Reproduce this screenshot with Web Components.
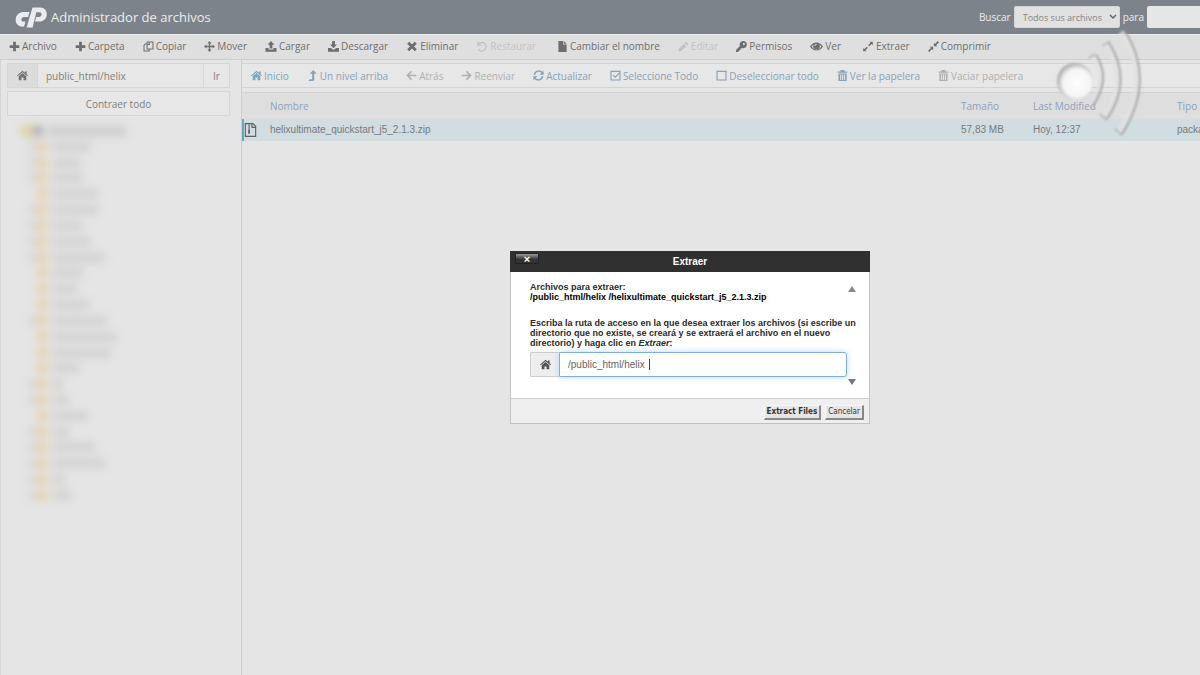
<!DOCTYPE html>
<html lang="es">
<head>
<meta charset="utf-8">
<title>Administrador de archivos</title>
<style>
html, body { margin: 0; height: 100%; }
body { background: #e5e5e5; font-family: "Open Sans", "Noto Sans", sans-serif; font-size: 10px; color: #747474; overflow: hidden; }
</style>
</head>
<body>
<fm-app></fm-app>
<script>
const define = (name, html, setup) => {
  const tpl = document.createElement('template');
  tpl.innerHTML = html;
  customElements.define(name, class extends HTMLElement {
    constructor() {
      super();
      this.attachShadow({ mode: 'open' }).append(tpl.content.cloneNode(true));
    }
    connectedCallback() { if (setup) setup(this, this.shadowRoot); }
  });
};

const ICONS = {
  plus: '<path d="M6 1h4v5h5v4h-5v5H6v-5H1V6h5z"/>',
  copy: '<path d="M6 1.500h8.500v10H6zM6 4.500H3L1.500 6v8.500H9V12M9 1.500V5H6" fill="none" stroke="currentColor" stroke-width="1.500"/>',
  move: '<path d="M8 0l3 3.500H9V7h3.500V5L16 8l-3.500 3V9H9v3.500h2L8 16l-3-3.500h2V9H3.500v2L0 8l3.500-3v2H7V3.500H5z"/>',
  upload: '<path d="M8 0l5 5.500h-3V11H6V5.500H3zM0 10h4.500v2.500h7V10H16v5.500H0z"/>',
  download: '<path d="M6 0h4v5h3l-5 5.500L3 5h3zM0 10h4l4 3 4-3h4v5.500H0z"/>',
  times: '<path d="M4 1l4 4 4-4 3 3-4 4 4 4-3 3-4-4-4 4-3-3 4-4-4-4z"/>',
  undo: '<path d="M2 1v5h5M2.500 5.500C5 1.500 10 1 12.500 4c3 3.500 1 8.500-2.500 10-2.500 1-5 .5-7-1.500" fill="none" stroke="currentColor" stroke-width="2"/>',
  file: '<path d="M2 0h7v5h5v11H2zM10 0l4 4h-4z"/>',
  pencil: '<path d="M11.500 1l3.500 3.500-2 2L9.500 3zM8.500 4L12 7.500 4.500 15H1v-3.500z"/>',
  key: '<path d="M10.500 0a5.200 5.200 0 0 1 0 10.400c-.8 0-1.500-.1-2.200-.4L6.500 11.500V13H5v1.500H3.500V16H0v-3l5.700-5.700A5.200 5.200 0 0 1 10.500 0zM11.500 3a1.500 1.500 0 1 0 1.500 1.500A1.500 1.500 0 0 0 11.500 3z" fill-rule="evenodd"/>',
  eye: '<path d="M0 8c4-6.500 12-6.500 16 0-4 6.500-12 6.500-16 0zm2 0c3 4.700 9 4.700 12 0-.8-1.200-1.700-2-2.800-2.600a4 4 0 1 1-6.400 0C3.700 6 2.800 6.800 2 8zm6-3.500A3 3 0 0 0 5.500 7H7a1.500 1.500 0 0 1 1-1z" fill-rule="evenodd"/>',
  expand: '<path d="M10 1h5v5l-1.700-1.700-3.500 3.500-1.600-1.600 3.500-3.500zM1 10l1.700 1.700 3.500-3.500 1.600 1.600-3.500 3.500L6 15H1z"/>',
  compress: '<path d="M8.500 2.500l1.700 1.700L14 0l2 2-4.200 3.800 1.700 1.700h-5zM2.500 8.500h5v5l-1.700-1.700L2 16l-2-2 4.200-3.800z"/>',
  home: '<path d="M8 1l3.500 3V2H14v4.200L16 8l-1 1.200L8 3.200 1 9.200 0 8zM8 4.500l5.500 4.700V15H9.500v-4h-3v4h-4V9.200z"/>',
  up: '<path d="M9 0l5 5.500h-3.500V14q0 2-2 2H2l2-2.500h3.500v-8H4z"/>',
  left: '<path d="M8 2L2 8l6 6M2 8h13" fill="none" stroke="currentColor" stroke-width="2.200"/>',
  right: '<path d="M8 2l6 6-6 6M14 8H1" fill="none" stroke="currentColor" stroke-width="2.200"/>',
  refresh: '<path d="M2 7c1-6 8.500-7.500 12-2.500M14 9c-1 6-8.500 7.500-12 2.500" fill="none" stroke="currentColor" stroke-width="2.200"/><path d="M15.500 1v6h-6zM.5 15V9h6z"/>',
  checked: '<path d="M1.500 2h13v12.500h-13zM4.500 7.500l3 3 6-6" fill="none" stroke="currentColor" stroke-width="1.700"/>',
  square: '<path d="M1.500 2h13v12.500h-13z" fill="none" stroke="currentColor" stroke-width="1.700"/>',
  trash: '<path d="M5 0h6v2h4v2H1V2h4zM2 5h12v11H2zM4.500 6.500v8H6v-8zm2.800 0v8h1.500v-8zm2.800 0v8h1.500v-8z" fill-rule="evenodd"/>',
  zip: '<path d="M2.500 1.200h8L13.500 4v10.800h-11zM9.500 1.200v4h4M6.500 2v6" fill="none" stroke="currentColor" stroke-width="1.200"/><path d="M5.500 8h2v4h-2z"/>'
};

define('fm-icon', `<style>
:host { display: block; flex: none; width: 11px; height: 11px; }
:host([wide]) { width: 12px; }
:host([name="eye"]) { width: 13px; height: 13px; }
svg { display: block; width: 100%; height: 100%; fill: currentColor; }
</style><svg viewBox="0 0 16 16" aria-hidden="true"></svg>`, (el, root) => {
  root.querySelector('svg').innerHTML = ICONS[el.getAttribute('name')] || '';
});

define('fm-action', `<style>
:host { display: block; flex: none; }
:host([group]) { margin-left: 3px; }
button { display: flex; align-items: center; gap: 2px; margin: 0; padding: 0 9px; border: 0; background: none; font: inherit; line-height: 16px; color: inherit; white-space: nowrap; }
:host([disabled]) { color: var(--disabled, #c2c2c2); }
</style><button type="button"><fm-icon></fm-icon><slot></slot></button>`, (el, root) => {
  const icon = root.querySelector('fm-icon');
  const fresh = document.createElement('fm-icon');
  fresh.setAttribute('name', el.getAttribute('icon'));
  if (el.hasAttribute('wide')) fresh.setAttribute('wide', '');
  icon.replaceWith(fresh);
  root.querySelector('button').disabled = el.hasAttribute('disabled');
});

define('fm-header', `<style>
:host { display: flex; align-items: center; height: 34px; padding-left: 15px; background: #7c838b; color: #eceeef; }
svg { width: 33px; height: 24px; flex: none; }
h1 { margin: 0 auto 0 3px; font-size: 13px; line-height: 20px; font-weight: 400; white-space: nowrap; }
form { display: flex; align-items: center; gap: 3px; }
.pick { display: flex; position: relative; }
select { appearance: none; width: 106px; height: 22px; margin: 0; padding: 0 8px; border: 1px solid #d5d5d5; border-radius: 2px; background: #e1e1e1; color: #858585; font: inherit; font-size: 9px; }
.pick svg { position: absolute; right: 3px; top: 7px; width: 8px; height: 8px; }
input { box-sizing: border-box; width: 53px; height: 22px; border: 0; border-radius: 2px 0 0 2px; background: #e6e6e6; font: inherit; }
</style>
<svg viewBox="0 0 33 24" aria-hidden="true"><g fill="#e9edf1" fill-rule="evenodd"><path d="M14.500 7l-1.300 5H9c-3 0-3.500 4.500-.8 4.500h2.300l-1.400 5H7.500C-2.500 21.500-1 7 8.500 7z"/><path d="M17.500 2.500h7.300C34.500 2.500 34 16.500 24 16.500h-4l1.200-4.600h2.600c3.300 0 3.900-4.700.7-4.700h-3.200L17.600 22.500h-6z"/></g></svg>
<h1>Administrador de archivos</h1>
<form><label for="scope">Buscar</label>
<span class="pick"><select id="scope"><option>Todos sus archivos</option></select><svg viewBox="0 0 8 8"><path d="M1 2l3 3 3-3" fill="none" stroke="#666" stroke-width="1.500"/></svg></span>
<label for="term">para</label><input id="term" type="search"></form>`);

define('fm-toolbar', `<style>
:host { display: flex; align-items: flex-start; padding-top: 3px; box-sizing: border-box; height: 26px; border-top: 1px solid #ececec; border-bottom: 1px solid #cdcdcd; background: #dfdfdf; color: #6e6e6e; }
</style><slot></slot>`);

define('fm-sidebar', `<style>
:host { display: block; flex: none; width: 242px; box-sizing: border-box; border-right: 1px solid #cfcfcf; border-left: 1px solid #d5d5d5; padding: 3px 11px 0 6px; }
.path { display: flex; height: 25px; box-sizing: border-box; border: 1px solid #d6d6d6; }
.home { display: grid; place-items: center; width: 29px; border-right: 1px solid #d6d6d6; background: #dcdcdc; }
input { flex: 1; min-width: 0; border: 0; padding: 0 8px; background: #e7e7e7; color: #808080; font: inherit; }
button { margin: 0; border: 1px solid #d6d6d6; background: #e7e7e7; color: #808080; font: inherit; line-height: 16px; }
.path button { width: 26px; border-width: 0 0 0 1px; padding: 0; }
.all { display: block; width: 100%; height: 25px; margin-top: 3px; padding: 0; }
</style>
<div class="path"><span class="home"><fm-icon name="home"></fm-icon></span><input aria-label="Ruta" value="public_html/helix"><button type="button">Ir</button></div>
<button class="all" type="button">Contraer todo</button>
<fm-tree></fm-tree>`);

define('fm-tree', `<style>
:host { display: flex; flex-direction: column; height: 380px; margin-top: 7px; filter: blur(4px); }
.row { display: flex; flex: 1; align-items: center; padding-left: 21px; }
.row i { display: block; height: 10px; }
.knob { width: 8px; background: #d8d8d8; }
.knob.leaf { background: none; }
.folder { width: 12px; background: #e6d2b2; }
.name { margin-left: 5px; background: #d3d3d3; }
.row.root { padding-left: 14px; }
.root .folder { background: #e0d09c; }
.root .disk { width: 10px; background: #acacb0; }
.root .name { margin-left: 5px; background: #cdcdcd; }
</style><div class="row root"><i class="folder"></i><i class="disk"></i><i class="name" style="width:78px"></i></div>`, (el, root) => {
  const rows = [[38, 1], [28, 1], [30, 1], [45, 0], [46, 1], [30, 1], [38, 1], [52, 1], [30, 0], [24, 0], [36, 0], [54, 1], [64, 0], [58, 0], [26, 0], [10, 1], [16, 1], [34, 0], [16, 1], [42, 1], [52, 1], [12, 1], [18, 1]];
  for (const [w, open] of rows) {
    const row = document.createElement('div');
    row.className = 'row';
    row.innerHTML = '<i class="knob' + (open ? '' : ' leaf') + '"></i><i class="folder"></i><i class="name" style="width:' + w + 'px"></i>';
    root.append(row);
  }
});

define('fm-files', `<style>
:host { display: block; flex: 1; min-width: 0; padding-top: 3px; overflow: hidden; --disabled: #afafaf; }
nav { display: flex; align-items: center; height: 25px; box-sizing: border-box; border: solid #d3d3d3; border-width: 1px 0 1px 0; background: #e7e7e7; color: #88a2b8; }
nav ::slotted([icon="home"]) { color: #7ba6c4; }
table { width: 100%; margin-top: 4px; table-layout: fixed; border-collapse: collapse; text-align: left; white-space: nowrap; }
th { height: 26px; box-sizing: border-box; padding: 0; background: #dedede; border-top: 1px solid #d2d2d2; color: #919fbb; font-size: 10px; font-weight: 400; }
td { height: 22px; padding: 0; background: #d2dde1; font-family: "Liberation Sans", Arial, sans-serif; font-size: 10px; color: #757a7d; }
td:first-child { box-shadow: inset 2px 0 #6ba6bf; padding-left: 1px; }
td fm-icon { width: 15px; height: 16px; color: #606060; }
.mark { width: 28px; } .size { width: 72px; } .date { width: 144px; } .type { width: 23px; }
</style>
<nav><slot></slot></nav>
<table>
<thead><tr><th class="mark"></th><th>Nombre</th><th class="size">Tamaño</th><th class="date">Last Modified</th><th class="type">Tipo</th></tr></thead>
<tbody><tr><td><fm-icon name="zip"></fm-icon></td><td>helixultimate_quickstart_j5_2.1.3.zip</td><td>57,83 MB</td><td>Hoy, 12:37</td><td>packa</td></tr></tbody>
</table>`);

define('fm-dialog', `<style>
:host { position: absolute; left: 510px; top: 251px; width: 360px; display: block; box-sizing: border-box; border: 1px solid #c2c2c2; border-top: 0; background: #fff; color: #2b2b2b; font: bold 9px/10px "Liberation Sans", Arial, sans-serif; }
header { display: flex; height: 21px; margin: 0 -1px; background: #303030; color: #fff; position: relative; }
h2 { margin: auto; font-size: 10px; line-height: 20px; }
.close { position: absolute; left: 5px; top: 2px; width: 24px; height: 11px; padding: 0; border: 1px solid #222; background: linear-gradient(#999, #333 60%); color: #fff; font: bold 11px/8px "Liberation Sans", sans-serif; }
.body { position: relative; padding: 10px 8px 21px 19px; }
p { margin: 0 0 16px; }
p + p { margin-bottom: 4px; }
strong { color: #000; }
.scroll i { position: absolute; right: 13px; border: solid transparent; border-width: 0 4px; }
.scroll .up { top: 14px; border-bottom: 6px solid #888; }
.scroll .down { bottom: 13px; border-top: 6px solid #777; }
.field { display: flex; height: 25px; margin-right: 14px; position: relative; }
.home { display: grid; place-items: center; width: 29px; box-sizing: border-box; border: 1px solid #ccc; border-right: 0; border-radius: 2px 0 0 2px; background: #eee; color: #555; }
input { flex: 1; min-width: 0; box-sizing: border-box; padding: 0 8px; border: 1px solid #7fb0dc; border-radius: 0 3px 3px 0; box-shadow: 0 0 6px #b5daf5; font: 10px "Liberation Sans", sans-serif; color: #666; outline: 0; }
.caret { position: absolute; left: 119px; top: 7px; width: 1px; height: 11px; background: #444; }
footer { display: flex; justify-content: flex-end; gap: 4px; padding: 6px 5px 3px; border-top: 1px solid #ccc; background: #efefef; }
footer button { height: 15px; margin: 0; padding: 0 2px; border: 1px solid #f8f8f8; border-right: 2px solid #888; border-bottom: 2px solid #888; background: #e6e6e6; color: #333; font: 8px/10px "DejaVu Sans Condensed", "Open Sans", sans-serif; }
footer .main { font-weight: bold; }
</style>
<header><button class="close" type="button" aria-label="Cerrar">×</button><h2>Extraer</h2></header>
<div class="body"><p>Archivos para extraer:<br><strong>/public_html/helix /helixultimate_quickstart_j5_2.1.3.zip</strong></p>
<p><label for="dest">Escriba la ruta de acceso en la que desea extraer los archivos (si escribe un directorio que no existe, se creará y se extraerá el archivo en el nuevo directorio) y haga clic en <em>Extraer</em>:</label></p>
<div class="field"><span class="home"><fm-icon name="home"></fm-icon></span><input id="dest" value="/public_html/helix"><span class="caret"></span></div>
<div class="scroll"><i class="up"></i><i class="down"></i></div></div>
<footer><button class="main" type="button">Extract Files</button><button type="button">Cancelar</button></footer>`);

define('fm-signal', `<style>
:host { position: absolute; right: 50px; top: 24px; width: 100px; height: 116px; pointer-events: none; }
svg { display: block; }
</style>
<svg width="100" height="116" viewBox="0 0 100 116" aria-hidden="true">
<defs><filter id="soft" x="-20%" y="-20%" width="140%" height="140%"><feGaussianBlur stdDeviation="1"/></filter>
<radialGradient id="ball" cx=".56" cy=".56" r=".58"><stop offset="0" stop-color="#fff"/><stop offset=".68" stop-color="#f4f4f4"/><stop offset="1" stop-color="#a2a2a2"/></radialGradient></defs>
<circle cx="25" cy="57" r="18" fill="url(#ball)" filter="url(#soft)"/>
<g fill="none" filter="url(#soft)"><g stroke="#e2e2e2" stroke-opacity=".75" stroke-width="6"><path d="M43 33Q60 55 41 82"/><path d="M56 22Q80 56 54 93"/><path d="M71 8Q103 56 69 108"/></g>
<g stroke="#858585" stroke-opacity=".65" stroke-width="2"><path d="M46 31Q62 55 42 83"/><path d="M59 19Q83 56 57 95"/><path d="M75 7Q106 56 72 110"/><path d="M39 34L45 30M53 22L60 17M50 90L57 96M65 105L72 111" stroke-opacity=".45"/></g></g></svg>`);

define('fm-app', `<style>
:host { display: flex; flex-direction: column; height: 100%; min-height: 100vh; position: relative; overflow: hidden; }
main { display: flex; flex: 1; }
</style>
<fm-header></fm-header>
<fm-toolbar>
<fm-action icon="plus">Archivo</fm-action><fm-action icon="plus">Carpeta</fm-action><fm-action icon="copy">Copiar</fm-action><fm-action icon="move">Mover</fm-action><fm-action icon="upload" wide>Cargar</fm-action><fm-action icon="download">Descargar</fm-action><fm-action icon="times" wide>Eliminar</fm-action><fm-action icon="undo" disabled wide>Restaurar</fm-action><fm-action icon="file" group>Cambiar el nombre</fm-action><fm-action icon="pencil" disabled>Editar</fm-action><fm-action icon="key">Permisos</fm-action><fm-action icon="eye">Ver</fm-action><fm-action icon="expand" group wide>Extraer</fm-action><fm-action icon="compress">Comprimir</fm-action>
</fm-toolbar>
<main><fm-sidebar></fm-sidebar><fm-files>
<fm-action icon="home">Inicio</fm-action><fm-action icon="up">Un nivel arriba</fm-action><fm-action icon="left" disabled>Atrás</fm-action><fm-action icon="right" disabled>Reenviar</fm-action><fm-action icon="refresh">Actualizar</fm-action><fm-action icon="checked">Seleccione Todo</fm-action><fm-action icon="square">Deseleccionar todo</fm-action><fm-action icon="trash">Ver la papelera</fm-action><fm-action icon="trash" disabled>Vaciar papelera</fm-action>
</fm-files></main>
<fm-dialog></fm-dialog>
<fm-signal></fm-signal>`);
</script>
</body>
</html>
